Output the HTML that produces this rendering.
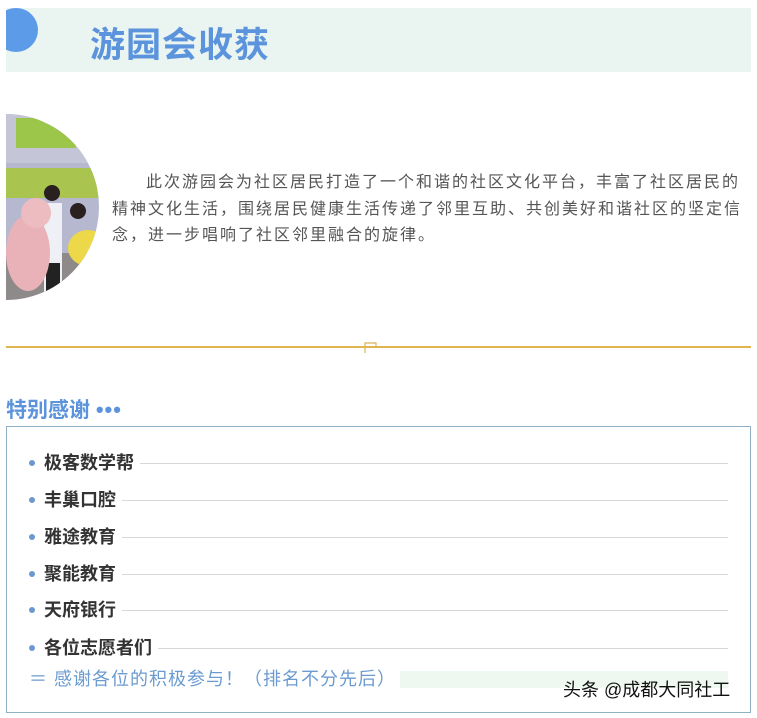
<!DOCTYPE html>
<html><head><meta charset="utf-8"><style>
body{margin:0;width:757px;height:718px;background:#fff;position:relative;overflow:hidden;font-family:"Liberation Sans","Noto Sans CJK SC",sans-serif}
.a{position:absolute}
.band{left:6px;top:8px;width:745px;height:64px;background:#eaf4f1;overflow:hidden}
.title{left:90px;top:24px;font-size:35px;font-weight:bold;color:#5b94dc;line-height:44px;letter-spacing:1px}
.p{left:112px;top:170px;font-size:16px;letter-spacing:2px;color:#555;line-height:26.5px;white-space:nowrap}
.item{left:29px;font-size:18px;font-weight:bold;color:#333;height:22px;line-height:22px;width:699px;display:flex;align-items:center}
.item i{display:inline-block;width:6px;height:6px;border-radius:50%;background:#6d98cf;margin-right:9px}
.item b{flex:1;height:1px;background:#d8d8d8;margin-left:6px}
</style></head><body>
<div class="a band"><div class="a" style="left:-12px;top:0;width:44px;height:44px;border-radius:50%;background:#5b9be8"></div></div>
<div class="a title">游园会收获</div>
<svg class="a" style="left:6px;top:113px" width="94" height="188" viewBox="0 0 94 188">
<defs><clipPath id="c"><circle cx="0" cy="94" r="93"/></clipPath></defs>
<g clip-path="url(#c)">
<rect width="94" height="188" fill="#b6b8d0"/>
<rect x="0" y="0" width="94" height="50" fill="#c4c6d8"/>
<rect x="10" y="5" width="60" height="30" fill="#9cc64a"/>
<rect x="0" y="55" width="94" height="30" fill="#a9c44f"/>
<rect x="0" y="140" width="94" height="48" fill="#8e8a8a"/>
<rect x="38" y="90" width="18" height="90" fill="#eef0f5"/>
<rect x="40" y="150" width="14" height="38" fill="#222"/>
<circle cx="46" cy="80" r="8" fill="#2a2020"/>
<circle cx="72" cy="98" r="8" fill="#2a2020"/>
<ellipse cx="22" cy="140" rx="22" ry="38" fill="#e8b2b8"/>
<circle cx="30" cy="100" r="15" fill="#ecbcc0"/>
<ellipse cx="82" cy="135" rx="20" ry="18" fill="#ecd848"/>
</g></svg>
<div class="a p"><span style="margin-left:34px"></span>此次游园会为社区居民打造了一个和谐的社区文化平台，丰富了社区居民的<br>精神文化生活，围绕居民健康生活传递了邻里互助、共创美好和谐社区的坚定信<br>念，进一步唱响了社区邻里融合的旋律。</div>
<div class="a" style="left:6px;top:346px;width:745px;height:2px;background:#e0b550"></div>
<svg class="a" style="left:360px;top:340px" width="30" height="14"><path d="M5 13V3H16V7.5" stroke="#d9b25a" stroke-width="1.2" fill="none"/></svg>
<div class="a" style="left:6px;top:397px;font-size:21px;font-weight:bold;color:#5b94dc;line-height:26px">特别感谢 <span style="font-size:22px;letter-spacing:1px">•••</span></div>
<div class="a" style="left:6px;top:426px;width:743px;height:285px;border:1px solid #8fb0c6"></div>
<div class="a item" style="top:452px"><i></i>极客数学帮<b></b></div>
<div class="a item" style="top:489px"><i></i>丰巢口腔<b></b></div>
<div class="a item" style="top:526px"><i></i>雅途教育<b></b></div>
<div class="a item" style="top:563px"><i></i>聚能教育<b></b></div>
<div class="a item" style="top:599px"><i></i>天府银行<b></b></div>
<div class="a item" style="top:637px"><i></i>各位志愿者们<b></b></div>
<div class="a" style="left:400px;top:671px;width:328px;height:17px;background:#eef8f0"></div>
<div class="a" style="left:29px;top:668px;font-size:18px;color:#6c9bd0;line-height:22px;letter-spacing:1px">＝ 感谢各位的积极参与！（排名不分先后）</div>
<div class="a" style="left:563px;top:679px;font-size:18px;color:#111;line-height:22px">头条 @成都大同社工</div>
</body></html>
